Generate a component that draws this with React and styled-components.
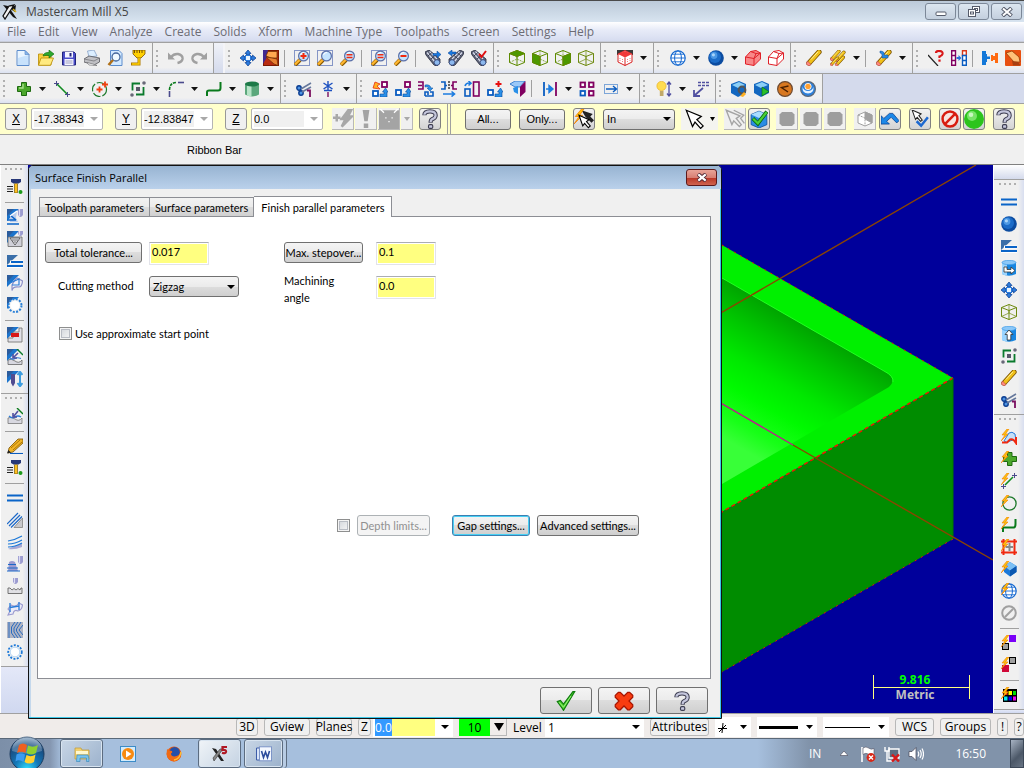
import React from "react";
import styled, { createGlobalStyle, css } from "styled-components";

const UI_FONT = '"Open Sans", "Noto Sans", sans-serif';
const ENTRY_FONT = '"Liberation Sans", Arial, sans-serif';
const DIALOG_FONT = 'Lato, "Liberation Sans", sans-serif';

// ---------- shared icon parts ----------

const Bolt = () => (
    <g>
        <path d="M6 0 L1 6 L4 6 L0 12 L7 5 L4.5 5 L8 0 Z" fill="#FFC20E" stroke="#F07D00" strokeWidth=".6" />
    </g>
);

const Lens = ({ dashed, sign }) => (
    <g>
        {dashed && <rect x=".5" y=".5" width="15" height="15" fill="none" stroke="#1A3A9C" strokeDasharray="1 1" />}
        <path d="M1 15 L6 10" stroke="#8A5A00" strokeWidth="4" />
        <path d="M1 14.5 L6 9.5" stroke="#FFB62E" strokeWidth="2.4" />
        <circle cx="9.5" cy="6" r="4.9" fill="#C4E4FF" stroke="#5A6FA8" strokeWidth="1.2" />
        <path d="M6.5 5 A3.5 3.5 0 0 1 10 2.5" stroke="#fff" fill="none" />
        {sign === "plus" && <path d="M6.5 6 H12.5 M9.5 3 V9" stroke="#F02A10" strokeWidth="2" />}
        {sign === "minus" && <path d="M6.5 6 H12.5" stroke="#F02A10" strokeWidth="2" />}
        {sign === "equal" && <path d="M6.5 4.8 H12.5 M6.5 7.6 H12.5" stroke="#F02A10" strokeWidth="1.5" />}
    </g>
);

const Scope = ({ flip, mark }) => (
    <g>
        <g transform={flip ? "translate(16 0) scale(-1 1)" : undefined}>
            <path d="M0 2 L4 0 L15 9 L15 13 L12 16 L9 15 L1 5 Z" fill="#5E6478" stroke="#22263A" strokeWidth=".8" />
            <path d="M2 2.5 L10 12 M4.5 1.5 L12 9" stroke="#D8DCEC" strokeWidth="1.2" />
            <path d="M3 6 L7 2.5 M6 9 L10 5.5" stroke="#22263A" strokeWidth=".8" />
            <ellipse cx="12" cy="12.5" rx="2.8" ry="2.8" fill="#8DB9EE" stroke="#33457A" strokeWidth=".8" />
        </g>
        {mark === "right" && <path d="M8 3.5 H12 V1 L16 4.5 L12 8 V5.5 H8 Z" fill="#1A7AE0" stroke="#083C8C" strokeWidth=".5" />}
        {mark === "left" && <path d="M8 2 H4 V0 L0 3 L4 6 V4 H8 Z" fill="#1A7AE0" stroke="#083C8C" strokeWidth=".5" />}
        {mark === "check" && <path d="M8 4 L10.5 7 L15 1" stroke="#E01010" strokeWidth="2" fill="none" />}
    </g>
);

const WireBox = ({ color, face, fill }) => (
    <g stroke={color} fill="none" strokeWidth="1">
        {face === "top" && <path d="M.5 3.5 L8 .5 L15.5 3.5 L8 6.5 Z" fill={fill} />}
        {face === "left" && <path d="M.5 3.5 L8 6.5 V15.5 L.5 12.5 Z" fill={fill} />}
        {face === "right" && <path d="M15.5 3.5 L8 6.5 V15.5 L15.5 12.5 Z" fill={fill} />}
        <path d="M.5 3.5 L8 .5 L15.5 3.5 V12.5 L8 15.5 L.5 12.5 Z" />
        <path d="M.5 3.5 L8 6.5 L15.5 3.5 M8 6.5 V15.5" />
        <path d="M8 .5 V9 L.5 12.5 M8 9 L15.5 12.5" strokeWidth=".7" strokeDasharray={face ? "2 1" : undefined} />
    </g>
);

const Globe = ({ color }) => (
    <g fill="none" stroke={color}>
        <circle cx="8" cy="8" r="7.2" fill="#fff" strokeWidth="1.2" />
        <ellipse cx="8" cy="8" rx="3.4" ry="7.2" />
        <path d="M.8 8 H15.2 M2 4.2 H14 M2 11.8 H14" strokeWidth=".9" />
    </g>
);

const Pencil = () => (
    <g>
        <path d="M3 13 L13 2" stroke="#7A5200" strokeWidth="5.2" strokeLinecap="round" />
        <path d="M4 12 L13 2" stroke="#F0C018" strokeWidth="3.6" strokeLinecap="round" />
        <path d="M5 9.5 L12 1.8" stroke="#FFF09A" strokeWidth="1" />
        <path d="M1.5 11 L5 14.5 L3 16 L0 14 Z" fill="#FF8A80" stroke="#B04038" strokeWidth=".5" />
    </g>
);

const Wedge = ({ children }) => (
    <g>
        <path d="M0 0 H12 L0 12 Z" fill="#1C74CC" />
        <path d="M0 0 H7 L0 7 Z" fill="#2C5C9C" />
        {children}
    </g>
);

const Sq = ({ x, y, color, s = 5 }) => (
    <rect x={x} y={y} width={s} height={s} fill="#fff" stroke={color} strokeWidth="1.8" />
);

const PURPLE = "#800060";
const BLUE = "#0A5CC0";

const BendArrow = ({ x = 8, y = 7 }) => (
    <path
        d={`M${x} ${y + 6} H${x + 4} V${y + 4} H${x + 2.5} L${x + 5.5} ${y} L${x + 8} ${y + 4} H${x + 7} V${y + 9} H${x} Z`}
        fill="#2A90E8" stroke="#0A4C9C" strokeWidth=".6"
    />
);

const BlueCan = ({ children }) => (
    <g>
        <path d="M1 2.5 V14 Q8 17.5 15 14 V2.5 Z" fill="#1886E0" />
        <path d="M1 2.5 V14 Q4 15.5 6 15.6 V3 Z" fill="#9AD4FF" />
        <ellipse cx="8" cy="2.5" rx="7" ry="2.2" fill="#8CC8F8" stroke="#3A9AE8" strokeWidth=".7" />
        {children}
    </g>
);

const Cutter = ({ x = 10, y = 0, h = 9 }) => (
    <g>
        <path d={`M${x} ${y} H${x + 5} V${y + h - 2} Q${x + 2.5} ${y + h + 2} ${x} ${y + h - 2} Z`} fill="#9C9CD0" />
        <path d={`M${x + 1.5} ${y} V${y + h - 1}`} stroke="#DCDCF4" strokeWidth="1.2" />
    </g>
);

// ---------- icon set, 16 x 16 ----------

const icons = {
    newFile: (
        <g>
            <path d="M2 .5 H10 L14 4.5 V15.5 H2 Z" fill="#EAF5FF" stroke="#5C8CCC" />
            <path d="M3 8 L13 5 V15 H3 Z" fill="#C8E2FC" />
            <path d="M10 .5 V4.5 H14 Z" fill="#8CB8EC" stroke="#5C8CCC" strokeWidth=".7" />
        </g>
    ),
    open: (
        <g>
            <path d="M.5 4 H5 L6.5 5.5 H13 V15 H.5 Z" fill="#F8D040" stroke="#B88A00" strokeWidth=".8" />
            <path d="M3 8 H15.5 L12.5 15.3 H.5 Z" fill="#FFEA80" stroke="#B88A00" strokeWidth=".8" />
            <path d="M5 6 Q6 2 11 2.5 V0 L16 4 L11 8 V5.5 Q8 5 5 6 Z" fill="#2EA82E" stroke="#0A6A0A" strokeWidth=".6" />
        </g>
    ),
    save: (
        <g>
            <path d="M1.5 2 H13 L14.5 3.5 V15 H1.5 Z" fill="#4A4CC8" stroke="#22247C" />
            <rect x="4" y="2" width="8" height="5.5" fill="#F4F4FF" />
            <rect x="8.5" y="3" width="2" height="3.5" fill="#22247C" />
            <rect x="3.5" y="9" width="9" height="6" fill="#F4F4FF" />
            <path d="M4.5 11 H11.5 M4.5 13 H11.5" stroke="#A0A0C0" />
        </g>
    ),
    print: (
        <g>
            <path d="M5 7 L3.5 1 L10 0 L13 6 Z" fill="#DCEEFF" stroke="#7A96C0" strokeWidth=".7" />
            <path d="M0 9 L5 6 L15.5 8 V12 L10 15 L0 12 Z" fill="#C0C0C4" stroke="#55555A" strokeWidth=".8" />
            <path d="M0 9 L10 11 L15.5 8" stroke="#77777C" fill="none" strokeWidth=".8" />
            <path d="M3 12.5 L9 14 L13 15.5 L5 15 Z" fill="#fff" stroke="#66666A" strokeWidth=".6" />
        </g>
    ),
    preview: (
        <g>
            <path d="M3.5 .5 H12 L15 3.5 V15.5 H3.5 Z" fill="#D4EAFF" stroke="#5C8CCC" />
            <circle cx="9" cy="7" r="4" fill="#F0FAFF" stroke="#44669C" strokeWidth="1.3" />
            <path d="M1.5 15 L6 10" stroke="#B07018" strokeWidth="2.6" />
        </g>
    ),
    funnel: (
        <g>
            <path d="M3 0 H15 V4 L11 8 H7 L3 4 Z" fill="#FFD000" stroke="#7A5000" strokeWidth=".8" />
            <path d="M4.5 0 V3 M7 0 V3 M9.5 0 V3 M12 0 V3" stroke="#7A5000" />
            <path d="M9 8 V14 H1" stroke="#B07C00" strokeWidth="3" fill="none" />
            <path d="M9 8 V14 H2" stroke="#FFD000" strokeWidth="1.4" fill="none" />
        </g>
    ),
    undo: (
        <g fill="none" stroke="#A0A0A0" strokeWidth="2.4">
            <path d="M3 7 Q6 3.5 10 4 Q15 5 14.5 9 Q14 12 9.5 13" />
            <path d="M0 2.5 V9.5 H7 Z" fill="#A0A0A0" stroke="none" />
        </g>
    ),
    redo: (
        <g fill="none" stroke="#A0A0A0" strokeWidth="2.4">
            <path d="M13 7 Q10 3.5 6 4 Q1 5 1.5 9 Q2 12 6.5 13" />
            <path d="M16 2.5 V9.5 H9 Z" fill="#A0A0A0" stroke="none" />
        </g>
    ),
    fit: (
        <g fill="#2A7ADC" stroke="#0A3C90" strokeWidth=".7">
            <path d="M8 0 L11 3.5 H9.5 V5 H6.5 V3.5 H5 Z" />
            <path d="M8 16 L11 12.5 H9.5 V11 H6.5 V12.5 H5 Z" />
            <path d="M0 8 L3.5 5 V6.5 H5 V9.5 H3.5 V11 Z" />
            <path d="M16 8 L12.5 5 V6.5 H11 V9.5 H12.5 V11 Z" />
            <rect x="5.5" y="5.5" width="5" height="5" fill="#E8F4FF" stroke="#2A7ADC" strokeWidth="1" />
        </g>
    ),
    repaint: (
        <g>
            <rect x=".5" y=".5" width="15" height="15" fill="#B82C10" stroke="#7A1800" />
            <path d="M0 0 H5 L4 7 L0 14 Z" fill="#402890" />
            <path d="M5 1.5 H14 V8 L8 8 L3 6 Z" fill="#FFA850" stroke="#6A2C00" strokeWidth=".7" />
            <path d="M3 7 L9 8 L14 9 L15 15.5 L11 14 Z" fill="#E88030" stroke="#6A2C00" strokeWidth=".7" />
        </g>
    ),
    zoomWindow: <Lens dashed sign="plus" />,
    zoomTarget: <Lens dashed />,
    zoomOut: <Lens sign="equal" />,
    zoomPrev: <Lens dashed sign="equal" />,
    zoomMinus: <Lens sign="minus" />,
    scopeNext: <Scope mark="right" />,
    scopePrev: <Scope flip mark="left" />,
    scopeCheck: <Scope mark="check" />,
    cubeTop: <WireBox color="#5E8A00" face="top" fill="#4C9A00" />,
    cubeLeft: <WireBox color="#5E8A00" face="left" fill="#4C9A00" />,
    cubeRight: <WireBox color="#5E8A00" face="right" fill="#4C9A00" />,
    cubeIso: <WireBox color="#6E8A10" />,
    cubeRed: (
        <g>
            <path d="M0 0 H16 V5 H0 Z" fill="#3A3A3A" />
            <path d="M1 4 L8 .5 L15 4 V12 L8 15.5 L1 12 Z" fill="#fff" stroke="#D82020" />
            <path d="M1 4 L8 1 L15 4 L8 7.5 Z" fill="#F03838" />
            <path d="M8 7.5 V15.5" stroke="#D82020" />
            <path d="M3 8 V11 M5.5 9 V12 M10.5 12 V9 M13 11 V8" stroke="#F08080" strokeDasharray="1 1" />
        </g>
    ),
    globe: <Globe color="#1468D0" />,
    sphere: (
        <g>
            <circle cx="8" cy="8" r="7.8" fill="#0C4CA0" />
            <circle cx="7" cy="7" r="6" fill="#1C6CC8" />
            <circle cx="6" cy="5.5" r="3.4" fill="#4C98E4" />
            <circle cx="5.4" cy="4.8" r="1.6" fill="#A8D4FA" />
        </g>
    ),
    solidRed: (
        <g stroke="#E02028" strokeWidth="1">
            <path d="M.5 7 L5.5 1.5 L11 .5 L15.5 3 V9 L9 15.5 L.5 14 Z" fill="#F88888" />
            <path d="M.5 7 L9 8.5 V15.5 M9 8.5 L15.5 3 M5.5 1.5 L11 3.5 L15.5 3 M11 3.5 L9 8.5" fill="none" />
        </g>
    ),
    wireRed: (
        <g stroke="#E02028" strokeWidth="1">
            <path d="M.5 7 L5.5 1.5 L11 .5 L15.5 3 V9 L9 15.5 L.5 14 Z" fill="#fff" />
            <path d="M.5 7 L9 8.5 V15.5 M9 8.5 L15.5 3 M5.5 1.5 L11 3.5 L15.5 3 M11 3.5 L9 8.5" fill="none" />
        </g>
    ),
    pencil: <Pencil />,
    pencils: (
        <g>
            <g transform="scale(.68)"><Pencil /></g>
            <g transform="translate(5 1) scale(.68)"><Pencil /></g>
            <g transform="translate(5 6) scale(.64)"><Pencil /></g>
            <g transform="translate(0 7) scale(.56)"><Pencil /></g>
        </g>
    ),
    undelete: (
        <g>
            <Pencil />
            <path d="M4 1 Q9 1 8 5 H12 V8 H6 V5 Q6 3 4 3 Z" fill="#2A8AE0" stroke="#0A4C9C" strokeWidth=".5" />
        </g>
    ),
    analyze: (
        <g fill="none">
            <path d="M0 5 L10 16" stroke="#222" strokeWidth="1.2" />
            <path d="M8 3 Q8 1 11 1 Q15 1 14.5 4 Q14 6 11.5 6.5 V8" stroke="#D81818" strokeWidth="2.2" />
            <rect x="10.4" y="9.5" width="2.2" height="2.2" fill="#D81818" />
        </g>
    ),
    compare: (
        <g fill="#fff" strokeWidth="1.4">
            <path d="M.7 .7 H4.5 V15.3 H.7 Z M.7 5.5 H4.5 M.7 10.5 H4.5" stroke={PURPLE} />
            <path d="M11.5 .7 H15.3 V5.5 H11.5 Z" stroke="#D83818" />
            <path d="M11.5 5.5 H15.3 V15.3 H11.5 Z M11.5 10.5 H15.3" stroke={BLUE} />
            <path d="M5.5 7 H7.5 V5 L10.5 8 L7.5 11 V9 H5.5 Z" fill="#2A70D8" />
        </g>
    ),
    statistics: (
        <g>
            <path d="M0 1 H4 V4 H5 V6.5 H8 V9 H5 V12 H4 V15 H0 Z" fill="#1478D8" />
            <path d="M16 3 H13 V6 H11 V5 H9 V11 H11 V10 H13 V13 H16 Z" fill="#FF6A10" />
        </g>
    ),
    paint: (
        <g>
            <rect width="16" height="16" rx="1" fill="#E85010" />
            <path d="M1 3 L7 1 L14 7 L15 12 L9 12 Z" fill="#FFC078" stroke="#8C3400" strokeWidth=".7" />
            <path d="M7 11 L13 12 L15.5 15.5 H8 Z" fill="#A84010" />
        </g>
    ),
    point: (
        <g>
            <path d="M5.5 1.5 H10.5 V5.5 H14.5 V10.5 H10.5 V14.5 H5.5 V10.5 H1.5 V5.5 H5.5 Z" fill="#4CA82C" stroke="#1E6A10" />
            <path d="M7 3 V7 H3" stroke="#A8E08C" fill="none" strokeWidth="1.4" />
        </g>
    ),
    line: (
        <g fill="none">
            <path d="M3 3 L13 13" stroke="#108A20" strokeWidth="1.6" />
            <path d="M0 2.5 H5 M2.5 0 V5 M11 13.5 H16 M13.5 11 V16" stroke="#4A4A8C" />
        </g>
    ),
    circle: (
        <g fill="none">
            <circle cx="7.5" cy="8.5" r="7" stroke="#1E7A2C" strokeWidth="1.2" strokeDasharray="8 2" />
            <path d="M4.5 8.5 H10.5 M7.5 5.5 V11.5 M10 3.5 H16 M13 .5 V6.5" stroke="#F04010" strokeWidth="1.8" />
        </g>
    ),
    rectangle: (
        <g>
            <path d="M10 2.5 H2.5 V9.5 M6 13.5 H13.5 V6" fill="none" stroke="#0A7A2C" strokeWidth="1.8" />
            <rect x="6" y="6" width="4" height="4" fill="#585868" />
            <circle cx="14" cy="2" r="1.8" fill="#686878" />
            <circle cx="2" cy="14" r="1.8" fill="#686878" />
        </g>
    ),
    fillet: (
        <g fill="none">
            <path d="M1.5 16 V10" stroke="#4A4A8C" strokeWidth="1.6" />
            <path d="M1.5 9 Q1.5 1.5 9 1.5" stroke="#0A7A1C" strokeWidth="1.6" strokeDasharray="3 1" />
            <path d="M10 1.5 H16" stroke="#4A4A8C" strokeWidth="1.6" />
        </g>
    ),
    spline: <path d="M1 15 V11 Q1 9.5 3 9.5 H12 Q14.5 9.5 14.5 7 V1" fill="none" stroke="#0A7A1C" strokeWidth="2" />,
    cylinder: (
        <g>
            <path d="M1 3 V13.5 Q8 17.5 15 13.5 V3 Z" fill="#5CA87C" />
            <path d="M3 3 V14.5 Q5.5 15.5 7.5 15.5 V3 Z" fill="#B8E4C8" />
            <ellipse cx="8" cy="3" rx="7" ry="2.6" fill="#1E7A48" />
        </g>
    ),
    trim: (
        <g>
            <circle cx="3" cy="7" r="2.2" fill="#4C94E4" stroke="#0A3C90" strokeWidth="1.4" />
            <circle cx="5" cy="12" r="2.2" fill="#4C94E4" stroke="#0A3C90" strokeWidth="1.4" />
            <path d="M5 8 L15 2 M6 11 L15 6" stroke="#66789C" strokeWidth="1.6" />
            <path d="M11 9.5 H14 V16" fill="none" stroke="#7A1060" strokeWidth="1.8" />
        </g>
    ),
    breakIt: (
        <g stroke="#1C50C0" strokeWidth="1.4" fill="none">
            <path d="M8 0 V10 M3.5 2 L12.5 8 M12.5 2 L3.5 8 M4 9.5 H12" />
            <path d="M8 11 V16" stroke="#7A1060" />
        </g>
    ),
    xfDynamic: (
        <g>
            <path d="M3 1 L8 3 L5 5 L8 8 L1 7 Z" fill="#FFB020" stroke="#E83010" strokeWidth=".8" />
            <Sq x="10" y="1" color={PURPLE} /><Sq x="1" y="10" color={BLUE} /><BendArrow />
        </g>
    ),
    xfTranslate: <g><Sq x="10" y="1" color={PURPLE} /><Sq x="1" y="9" color={BLUE} /><BendArrow /></g>,
    xfRotate: (
        <g>
            <path d="M0 1 H5 V8 H0 M0 4.5 H4" fill="none" stroke={PURPLE} strokeWidth="1.6" />
            <path d="M7 4 Q12 3 13 7 L15 7 L12 10 L9 7 H11 Q10 5 7 6 Z" fill="#2A90E8" stroke="#0A4C9C" strokeWidth=".5" />
            <path d="M7 15 H15 V11 H12 M7 15 V11 H10 V14" fill="none" stroke={BLUE} strokeWidth="1.6" />
        </g>
    ),
    xfMirror: (
        <g fill="none" strokeWidth="1.6">
            <path d="M0 1 H4 V8 H0 M4 4.5 H6" stroke={BLUE} />
            <path d="M8 0 V9" stroke="#444" strokeDasharray="2 1" />
            <path d="M16 1 H12 V8 H16 M12 4.5 H10" stroke={PURPLE} />
            <path d="M2 13 H13 M10.5 10.5 L13.5 13 L10.5 15.5" stroke="#1C7CE0" />
        </g>
    ),
    xfScale: (
        <g fill="none" strokeWidth="1.6">
            <rect x="9.5" y="1" width="5.5" height="14" stroke={PURPLE} />
            <rect x="1" y="8" width="5" height="7" stroke={BLUE} />
            <path d="M1 5 Q2 1.5 6 2 M4.5 0 L7 2.2 L4.5 4.5" stroke="#1C7CE0" />
        </g>
    ),
    xfMove: (
        <g>
            <path d="M11.5 0 V6 M8.5 3 H14.5" stroke="#E81010" strokeWidth="2" />
            <Sq x="1" y="9" color={BLUE} /><BendArrow />
        </g>
    ),
    xfProject: (
        <g>
            <path d="M0 3 L5 0 H15 L10 6 H5 Z" fill="#9AC8F8" stroke={BLUE} strokeWidth=".7" />
            <path d="M10 6 L15.5 0 V11 L10 16 Z" fill={PURPLE} />
            <path d="M3 7 L8 5 V13 L4 11 Z" fill="#2A90E8" />
        </g>
    ),
    offset: (
        <g>
            <path d="M2 1 V15 " stroke={BLUE} strokeWidth="1.8" />
            <path d="M14 1 V15" stroke={PURPLE} strokeWidth="1.8" />
            <path d="M4 8 H9 M7 4.5 L11 8 L7 11.5 Z" stroke="#1C7CE0" strokeWidth="1.4" fill="#1C7CE0" />
        </g>
    ),
    array: (
        <g>
            <Sq x="1.5" y="1.5" color={PURPLE} s={4.5} /><Sq x="10" y="1.5" color={PURPLE} s={4.5} />
            <Sq x="1.5" y="10" color={BLUE} s={4.5} /><Sq x="10" y="10" color={PURPLE} s={4.5} />
        </g>
    ),
    drag: (
        <g fill="none" stroke={BLUE}>
            <rect x="1.5" y="3.5" width="13" height="9" strokeDasharray="1 1" />
            <path d="M3 8 H13 M10 5 L13.5 8 L10 11" strokeWidth="1.4" />
        </g>
    ),
    bulb: (
        <g>
            <circle cx="5.5" cy="5" r="4.6" fill="#FFDC50" stroke="#E8B020" strokeWidth=".7" />
            <path d="M3.8 10 H7.5 V15 H3.8 Z" fill="#C0A868" />
            <path d="M13 1 V15 M11 3.5 L13 1 L15 3.5 M11 12.5 L13 15 L15 12.5" fill="none" stroke="#5050A0" strokeWidth="1.3" />
        </g>
    ),
    note: (
        <g fill="none" stroke="#5050A0">
            <path d="M5 1.5 H16 M5 4.5 H16" strokeDasharray="3 1" strokeWidth="1.4" />
            <path d="M10 7 L2 14 M1 9 V15 H7" strokeWidth="1.8" />
        </g>
    ),
    toolGear: (
        <g>
            <path d="M0 3 L8 0 L15 3 V12 L7 16 L0 12 Z" fill="#1468C0" />
            <path d="M1 4 L8 1 L14 4 L7 7 Z" fill="#8CD0F8" />
            <circle cx="11" cy="9" r="3.4" fill="none" stroke="#555" strokeWidth="2" />
            <path d="M9 15 L13 11 L15 13 L12 16 Z" fill="#FFB020" />
        </g>
    ),
    toolPlay: (
        <g>
            <path d="M0 3 L8 0 L15 3 V12 L7 16 L0 12 Z" fill="#1468C0" />
            <path d="M1 4 L8 1 L14 4 L7 7 Z" fill="#8CD0F8" />
            <path d="M8 6 L15 10.5 L8 15 Z" fill="#2AC02A" stroke="#0A6A0A" strokeWidth=".6" />
        </g>
    ),
    backplot: (
        <g>
            <circle cx="8" cy="8" r="7.4" fill="#D87820" stroke="#6E4A30" strokeWidth="1.2" />
            <path d="M11.5 5 L4.5 6.5 L11 11" fill="none" stroke="#4A2000" strokeWidth="1.4" />
        </g>
    ),
    verify: (
        <g>
            <circle cx="8" cy="8" r="7.4" fill="#2C80DC" stroke="#5C6878" strokeWidth="1.2" />
            <path d="M2.5 6 Q4 10 8 10 Q12 10 13.5 6 Q14 12 8 12.5 Q2 12 2.5 6" fill="#E8F4FF" />
            <circle cx="8" cy="5.5" r="3.2" fill="#FFA030" stroke="#fff" strokeWidth=".8" />
        </g>
    ),
    lightGrey: <path d="M3 4 V10 M0 7 H6 M13 0 L7 8 H10 L7 14 L15 6 H12 L15 0 Z" fill="#A8A8A8" stroke="#A8A8A8" strokeWidth="2" />,
    bangGrey: <path d="M5 0 H11 L9.5 10 H6.5 Z M6 12 H10 V16 H6 Z" fill="#A4A4A4" />,
    boxGrey: (
        <g>
            <rect y="1" width="16" height="15" fill="#A4A4A4" />
            <path d="M1 0 L4 3 M15 0 L12 3" stroke="#fff" />
            <path d="M5 7 H6 M10 7 H11 M7.5 10 H8.5" stroke="#fff" />
        </g>
    ),
    help: (
        <g>
            <path d="M3.5 5 Q3.5 1.8 8 1.8 Q12.5 1.8 12.5 5 Q12.5 7.3 9.5 8.3 Q8.5 8.8 8.5 11" fill="none" stroke="#3C3C50" strokeWidth="3.4" />
            <path d="M3.5 4.6 Q3.8 1.8 8 1.8 Q12.5 1.8 12.5 5 Q12.5 7.3 9.5 8.3 Q8.5 8.8 8.5 10.6" fill="none" stroke="#C4C6DC" strokeWidth="1.8" />
            <rect x="6.8" y="12.5" width="3.4" height="3" rx="1" fill="#C4C6DC" stroke="#3C3C50" strokeWidth=".9" />
        </g>
    ),
    pickBolt: (
        <g>
            <path d="M6 1 L15 4 L13 6 L16 9 L14 11 L9 6 Z" fill="#222" />
            <Bolt />
            <path d="M4 5 L12 8.5 L10 10 L13 13.5 L11.5 15 L8.5 11.5 L7 13.5 Z" fill="#fff" stroke="#000" strokeWidth=".9" />
        </g>
    ),
    cursor: <path d="M1 1 L13 6 L9.5 8.5 L14.5 13.5 L12.5 15.5 L8 10.5 L6 14 Z" fill="#fff" stroke="#000" strokeWidth="1" />,
    cursorGrey: (
        <g fill="#F0F0F0" stroke="#A4A4A4" strokeWidth="1.1">
            <path d="M1 1 L12 5.5 L9 7.5 L13 12.5 L11.5 14 L7 9.5 L5.5 12.5 Z" />
            <path d="M7 1 L15 5 L12.5 7.5 L15.5 11.5" fill="none" />
        </g>
    ),
    solidCheck: (
        <g>
            <path d="M1 4 L8 1 L15 4 V13 L8 16 L1 13 Z" fill="#2A8CE4" stroke="#0A4C9C" strokeWidth=".7" />
            <path d="M1 4 L8 1 L15 4 L8 7 Z" fill="#A8DCFF" />
            <path d="M2.5 7.5 L7 12 L15 1.5" fill="none" stroke="#0A6A0A" strokeWidth="3.4" />
            <path d="M2.8 7.8 L7 11.8 L14.7 2" fill="none" stroke="#48D038" strokeWidth="2" />
        </g>
    ),
    hexGrey: <path d="M3 1 H13 L15.5 3.5 V12.5 L13 15 H3 L.5 12.5 V3.5 Z" fill="#9E9E9E" />,
    cubeGrey: (
        <g stroke="#A0A0A0" fill="#fff">
            <path d="M1 4 L8 1 L15 4 V12 L8 15 L1 12 Z" />
            <path d="M8 1 L15 4 V12 L8 8 Z" fill="#A0A0A0" />
            <path d="M1 4 L8 7 V15" fill="none" strokeDasharray="2 1" />
        </g>
    ),
    backArrow: <path d="M0 5 V12.5 H7.5 L5 10 L9 6.5 L14 11.5 L16 9.5 L10.5 3 H7.5 L2.5 7.5 Z" fill="#1C88E8" stroke="#0A4090" strokeWidth=".7" />,
    pickCheck: (
        <g>
            <path d="M1 0 L9 3.5 L7 5 L10 9 L8.5 10 L5.5 6.5 L4 8.5 Z" fill="#fff" stroke="#222" strokeWidth=".9" />
            <path d="M5 10 L9 14 L15 6.5" fill="none" stroke="#1C68D0" strokeWidth="2.2" />
        </g>
    ),
    stop: (
        <g fill="none" stroke="#D81C10" strokeWidth="2.2">
            <circle cx="8" cy="8" r="6.6" fill="#F8E4E0" />
            <path d="M3.5 12.5 L12.5 3.5" />
        </g>
    ),
    go: (
        <g>
            <circle cx="8" cy="8" r="8" fill="#2CC41C" />
            <circle cx="6.4" cy="5.6" r="4" fill="#78E468" />
            <circle cx="5.6" cy="4.6" r="1.8" fill="#C8F8C0" />
        </g>
    ),
    ok: (
        <g>
            <path d="M1 8.5 L3.5 7.5 L6 10.5 L13.5 .5 L15 .5 L7.5 13 L6 15.5 L5 14 Z" fill="#48D028" stroke="#0E7A0E" strokeWidth=".9" />
            <path d="M2.5 9 L6 13 L12 4" fill="none" stroke="#9CF080" strokeWidth=".8" />
        </g>
    ),
    cancel: (
        <path
            d="M1 3.5 L3.5 1 H5 L8 4 L11 1 H12.5 L15 3.5 V5 L12 8 L15 11 V12.5 L12.5 15 H11 L8 12 L5 15 H3.5 L1 12.5 V11 L4 8 L1 5 Z"
            fill="#F83C10" stroke="#A81400" strokeWidth="1"
        />
    ),
    // side bars
    tHead: (
        <g>
            <path d="M4 0 H14 V3 L11.5 4.5 H6.5 L4 3 Z" fill="#283878" />
            <path d="M9 4.5 V14" stroke="#8C6400" strokeWidth="3.6" />
            <path d="M9 5 V13.5" stroke="#FFC020" strokeWidth="2" />
            <path d="M0 7.5 H6 M0 10 H6 M0 12.5 H6" stroke="#222" strokeWidth="1.1" />
            <circle cx="13.5" cy="13" r="2" fill="#1C9A1C" />
        </g>
    ),
    roughParallel: (
        <Wedge>
            <path d="M3 7 L10 2 L9 9 L11 13 H3 Z" fill="#B8CCEC" />
            <path d="M0 11 H9 M0 15 H12 M3 6 L9 11" stroke="#0A64C8" strokeWidth="1.6" />
            <path d="M3 7 L10 2" stroke="#fff" strokeWidth="1.4" />
            <Cutter x={11} y={0} h={8} />
        </Wedge>
    ),
    roughPocket: (
        <Wedge>
            <path d="M1 6 H15 V15.5 H1 Z" fill="#D0D0D8" stroke="#666" strokeWidth=".8" />
            <path d="M3 7 H13 L8 14 Z M5 9 H11 M6.5 11 H9.5" fill="#F4F4FC" stroke="#555" strokeWidth=".9" />
            <Cutter x={11} y={0} h={5} />
        </Wedge>
    ),
    contour: (
        <g>
            <path d="M0 2 H11 L0 12 Z" fill="#3A6EA8" />
            <path d="M3 9 H16 M0 13.5 H16" stroke="#fff" strokeWidth="3" />
            <path d="M4 9 H16 M0 13 H16" stroke="#0A64C8" strokeWidth="2" />
        </g>
    ),
    flow: (
        <Wedge>
            <path d="M5 10 Q8 4 10 3 L15.5 6 Q15 12 12 12 Q6 11 5 15.5 Z" fill="#F0F0F8" stroke="#8C90C8" strokeWidth="1.2" />
            <path d="M3 8 L12 4 V10 L5 10" fill="none" stroke="#2A7CD8" strokeWidth="1.2" />
        </Wedge>
    ),
    radial: (
        <Wedge>
            <circle cx="8" cy="8.5" r="6.5" fill="#F0F0F0" stroke="#2A80D8" strokeWidth="2" strokeDasharray="2 1.4" />
            <circle cx="8" cy="8.5" r="4.6" fill="#fff" />
        </Wedge>
    ),
    restRed: (
        <Wedge>
            <path d="M1 15 V11 H6 V5 H12 V1 H15 V15 Z" fill="#E0E0E8" stroke="#777" strokeWidth=".9" />
            <rect x="4" y="6" width="8" height="4" fill="#D81818" />
        </Wedge>
    ),
    project: (
        <Wedge>
            <path d="M1 11 Q4 9 8 12 T15 11 V15.5 H1 Z" fill="#D8D8E0" stroke="#666" strokeWidth=".8" />
            <path d="M3 9 Q6 11 8 9.5 T14 9.5" fill="none" stroke="#2A7CD8" strokeWidth="1.2" />
            <path d="M10 0 L16 6" stroke="#0A7A2C" strokeWidth="1.4" />
            <path d="M11 4 L7 8 M6 5 V9 H10" stroke="#5050A0" strokeWidth="1.6" fill="none" />
        </Wedge>
    ),
    plunge: (
        <Wedge>
            <path d="M4 3 H8 V12 L6 15.5 L4 12 Z" fill="#504C90" />
            <path d="M13 1 V15 M10.5 4 L13 .8 L15.5 4 M10.5 12 L13 15.2 L15.5 12" fill="none" stroke="#3C9CE0" strokeWidth="2" />
        </Wedge>
    ),
    projectOnly: (
        <g>
            <path d="M1 10 Q4 8 8 11 T15 10 V15.5 H1 Z" fill="#D8D8E0" stroke="#777" strokeWidth=".8" />
            <path d="M2 8 Q5 11 8 9 T14 9" fill="none" stroke="#2A7CD8" strokeWidth="1.3" />
            <path d="M11 3 L7 8 M6 5 V9 H10" stroke="#5050A0" strokeWidth="1.6" fill="none" />
            <path d="M10 0 L16 6" stroke="#0A7A1C" strokeWidth="1.4" />
        </g>
    ),
    bigPencil: (
        <g>
            <path d="M2 10 L11 1 H16 V5 L6 14 L1 15 Z" fill="#F0B428" stroke="#7A5200" strokeWidth=".8" />
            <path d="M4 10 L13 2 M6 12 L15 4" stroke="#A87000" strokeWidth=".9" />
            <path d="M1.4 12 L4 14.4 L0 15.6 Z" fill="#222" />
            <path d="M3 15.5 H16" stroke={BLUE} strokeWidth="1.1" />
        </g>
    ),
    bars: <path d="M0 5.5 H16 M0 10.5 H16" stroke="#0A64C8" strokeWidth="2" />,
    slant: (
        <g>
            <path d="M7 15.5 L15.5 6 V15.5 Z" fill="#C8C8CC" stroke="#777" strokeWidth=".7" />
            <path d="M0 12 L11 1 M2 14 L13 3 M4 15.5 L15 4.5" stroke="#1C68C8" strokeWidth="1.2" />
        </g>
    ),
    shallow: (
        <g>
            <path d="M1 15 L15 9 V13 Q8 16 1 15 Z" fill="#A8A8D4" />
            <path d="M1 7 Q8 6 15 2 M1 10 Q8 10 15 6 M1 13 Q8 13 15 9" stroke="#1C78D8" strokeWidth="1.2" fill="none" />
        </g>
    ),
    steep: (
        <g>
            <path d="M2 6 Q5 4 8 6 L11 15 H1 Z" fill="#9C9CD0" />
            <path d="M1 8.5 H9 M0 12 H11 M0 15 H13" stroke="#1C68C8" strokeWidth="1.2" />
            <Cutter x={11} y={0} h={8} />
        </g>
    ),
    leftover: (
        <g>
            <Cutter x={6} y={-1} h={7} />
            <path d="M1 10 H3 L5 12 L7 10.5 L9 12 L11 10.5 L13 12 L14 10 H15 V15.5 H1 Z" fill="#E0E0E4" stroke="#666" strokeWidth=".9" />
        </g>
    ),
    flowline: (
        <g>
            <path d="M1 9 L4 5 Q9 8 12 3 L15.5 5 Q15 10 11 11 Q7 9 6 14 L1 15 L3 11 Z" fill="#ECECF8" stroke="#9C9CD0" strokeWidth="1.2" />
            <path d="M3 3 V12 M3 7.5 L12 6 M12 2 V10" fill="none" stroke="#2A7CD8" strokeWidth="1.3" />
        </g>
    ),
    scallop: (
        <g fill="none" stroke="#2A6CC0">
            <rect width="16" height="16" fill="#B0B4C4" stroke="none" />
            <path d="M2 0 V16 M8 0 L4.5 5 V11 L8 16 M11 0 L7 6 V10 L11 16 M14 0 L9.5 7 V9 L14 16 M16 3 L12 8 L16 13" />
        </g>
    ),
    radialOnly: (
        <g>
            <circle cx="8" cy="8" r="6.8" fill="none" stroke="#1C78D8" strokeWidth="1.8" strokeDasharray="2 1.4" />
            <circle cx="8" cy="8" r="4.8" fill="#fff" stroke="#9CC8F0" strokeWidth=".7" />
        </g>
    ),
    canTurn: (
        <BlueCan>
            <path d="M3 7 V12 H10 V14 L14 10.5 L10 7 V9.5 H6 V7 Z" fill="#fff" stroke="#333" strokeWidth=".8" />
        </BlueCan>
    ),
    canUp: (
        <BlueCan>
            <path d="M8 4 L12 8.5 H9.8 V14 H6.2 V8.5 H4 Z" fill="#fff" stroke="#333" strokeWidth=".8" />
        </BlueCan>
    ),
    boltSurface: (
        <g>
            <path d="M3 12 L8 4 Q11 2 14 5 L15 12 Q12 10 9 12 Q6 15 3 12 Z" fill="#C4E0F8" stroke="#2A7CD8" />
            <path d="M1 13.5 H6 L9 10.5 Q12 9 15 14 V8" fill="none" stroke="#F02A10" strokeWidth="2" />
            <Bolt />
        </g>
    ),
    boltPoint: (
        <g>
            <path d="M6.5 1.5 H11 V5.5 H15.5 V10.5 H11 V14.5 H6.5 V10.5 H2.5 V5.5 H6.5 Z" fill="#4CA82C" stroke="#1E6A10" />
            <Bolt />
        </g>
    ),
    boltLine: (
        <g>
            <path d="M4 12 L12 4" stroke="#108A20" strokeWidth="1.6" />
            <path d="M11 2.5 H16 M13.5 0 V5 M0 13.5 H5 M2.5 11 V16" stroke="#4A4A8C" />
            <Bolt />
        </g>
    ),
    boltCircle: <g><circle cx="8.5" cy="8.5" r="6.6" fill="none" stroke="#1E7A2C" strokeWidth="1.3" /><Bolt /></g>,
    boltSpline: (
        <g>
            <path d="M2 15 V10.5 H13 Q14.5 10 14.5 7 V2" fill="none" stroke="#0A7A1C" strokeWidth="2" />
            <Bolt />
        </g>
    ),
    boltGrid: (
        <g>
            <path d="M4.5 8 H12 M8.5 4 V12" stroke="#888" strokeWidth="2" />
            <path d="M0 2.5 H16 M0 13.5 H16 M2.5 0 V16 M13.5 0 V16" stroke="#F02A10" strokeWidth="2" />
            <Bolt />
        </g>
    ),
    boltSolid: (
        <g>
            <path d="M9 1 L15.5 5 V11 L9 15.5 L3 11 V5 Z" fill="#1C78D8" />
            <path d="M9 1 L15.5 5 L9 9.5 L3 5 Z" fill="#7CC0F4" />
            <path d="M9 9.5 L15.5 5 V11 L9 15.5 Z" fill="#0C58B0" />
            <Bolt />
        </g>
    ),
    boltGlobe: <g><Globe color="#1468D0" /><Bolt /></g>,
    noGrey: (
        <g fill="none" stroke="#A0A0A0" strokeWidth="2">
            <circle cx="8" cy="8" r="6.8" />
            <path d="M4 12 L12 4" />
        </g>
    ),
    boltViolet: (
        <g>
            <rect x="8" y="0" width="7" height="7" fill="#7A00F8" />
            <rect x="1.5" y="8.5" width="6" height="6" fill="#A0A0A0" stroke="#000" />
            <Bolt />
        </g>
    ),
    boltCrimson: (
        <g>
            <rect x="8.5" y=".5" width="6" height="6" fill="#A0A0A0" stroke="#000" />
            <rect x="1" y="8" width="7" height="7" fill="#D00838" />
            <Bolt />
        </g>
    ),
    boltPalette: (
        <g>
            <rect x="2" y="2" width="14" height="13" fill="#000" />
            <path d="M3 4 H6.5 V8 H3 Z" fill="#F02010" /><path d="M7.5 4 H11 V8 H7.5 Z" fill="#FFFF00" />
            <path d="M12 4 H15 V8 H12 Z" fill="#00E000" /><path d="M3 9.5 H6.5 V13.5 H3 Z" fill="#00E8F0" />
            <path d="M7.5 9.5 H11 V13.5 H7.5 Z" fill="#0000F0" /><path d="M12 9.5 H15 V13.5 H12 Z" fill="#F000F0" />
            <Bolt />
        </g>
    ),
    // taskbar
    folder: (
        <g>
            <path d="M1 2 H7 L8 4 H15 V13 H1 Z" fill="#F0D070" stroke="#C09830" strokeWidth=".7" />
            <path d="M2 5 H14 V8 H2 Z" fill="#FFF8D0" />
            <path d="M3 9 H14 Q15 12 15 15.5 H12.5 V12 H6 V15.5 H2.5 Z" fill="#7CC4EC" stroke="#3C8CC0" strokeWidth=".7" />
        </g>
    ),
    media: (
        <g>
            <rect x=".5" y=".5" width="15" height="15" fill="#D4ECFC" stroke="#3C8CC8" />
            <circle cx="8" cy="8" r="6" fill="#F88A10" />
            <path d="M6 4.5 L11.5 8 L6 11.5 Z" fill="#fff" />
        </g>
    ),
    firefox: (
        <g>
            <circle cx="8" cy="8" r="7.4" fill="#E85A10" />
            <circle cx="8.6" cy="6.2" r="5.2" fill="#2450A8" />
            <path d="M1 3 Q3 5 6 5 Q7 6.5 5 7.5 Q5 10.5 8.5 10.5 Q13 10 15 6 Q16 14 8 15.4 Q1 14 .6 8 Z" fill="#F06A14" />
            <path d="M8 14 Q14 13 15 6" fill="none" stroke="#FFC030" strokeWidth="1.4" />
        </g>
    ),
    mcx: (
        <g>
            <path d="M0 2 L4 3 L12 15 H9 Z" fill="#222" />
            <path d="M11 3 L2 15 L1 12 L8 3 Z" fill="#888" stroke="#333" strokeWidth=".6" />
            <path d="M15 1 H10.5 V4 Q14.5 3.5 14 6 Q13.5 8 10 6.8" fill="none" stroke="#B01824" strokeWidth="2.2" />
        </g>
    ),
    mcLogo: (
        <g>
            <path d="M1 1 L6 2 L15 15 L11 13 Z" fill="#111" />
            <path d="M12 1 L3 15 L1 12 L7 2 Z" fill="#F4F4F4" stroke="#111" strokeWidth="1.3" />
            <path d="M10 3 L14 1 L13 8 L10 6 Z" fill="#111" />
            <path d="M11 5 L14 8" stroke="#D8B018" strokeWidth="1.6" />
        </g>
    ),
    word: (
        <g>
            <path d="M.5 2 H5 V14 H.5 Z" fill="#D8E4F8" stroke="#3C5CA8" />
            <rect x="3.5" y=".8" width="12" height="14" fill="#F4F8FF" stroke="#7C94C8" />
            <path d="M5.5 5 L7.5 11.5 L9.5 6 L11.5 11.5 L13.5 5" fill="none" stroke="#2C4C9C" strokeWidth="1.6" />
        </g>
    ),
    flag: (
        <g>
            <path d="M2 1 V16" stroke="#fff" strokeWidth="1.6" />
            <path d="M3 2 Q6 0 8.5 2 T14 2.5 V8.5 Q10 9.5 8 8 T3 8.5 Z" fill="#fff" stroke="#556" strokeWidth=".6" />
            <circle cx="11" cy="11.5" r="4.4" fill="#D82818" />
            <path d="M9 9.5 L13 13.5 M13 9.5 L9 13.5" stroke="#fff" strokeWidth="1.4" />
        </g>
    ),
    network: (
        <g>
            <path d="M5 3 H15 V12 H5 Z" fill="#5C6C80" stroke="#fff" strokeWidth="1.3" />
            <path d="M1 1 V5 H5 V1 M3 5 V15 H9" fill="none" stroke="#fff" strokeWidth="1.4" />
            <path d="M8 8.5 L15 15.5 M15 8.5 L8 15.5" stroke="#D81818" strokeWidth="2.4" />
        </g>
    ),
    speaker: (
        <g>
            <path d="M1 5.5 H4 L8 1.5 V14.5 L4 10.5 H1 Z" fill="#fff" stroke="#445" strokeWidth=".7" />
            <path d="M10 5.5 Q11.5 8 10 10.5 M12 4 Q14.5 8 12 12 M14 2.5 Q17 8 14 13.5" fill="none" stroke="#fff" strokeWidth="1.2" />
        </g>
    ),
};

const Icon = ({ name, size = 16 }) => (
    <svg width={size} height={size} viewBox="0 0 16 16" aria-hidden="true">
        {icons[name]}
    </svg>
);

const Triangle = ({ color = "#111", w = 7, h = 4 }) => (
    <svg width={w} height={h} viewBox="0 0 8 4" preserveAspectRatio="none" aria-hidden="true">
        <path d="M0 0 H8 L4 4 Z" fill={color} />
    </svg>
);

// ---------- data ----------

const menus = ["File", "Edit", "View", "Analyze", "Create", "Solids", "Xform", "Machine Type", "Toolpaths", "Screen", "Settings", "Help"];

// "|" is a divider, a trailing "+" adds a drop arrow
const row1 = [
    "newFile open save print preview funnel",
    "undo redo",
    "",
    "fit repaint | zoomWindow zoomTarget zoomOut | zoomPrev zoomMinus | scopeNext scopePrev scopeCheck",
    "cubeTop cubeLeft cubeRight cubeIso",
    "cubeRed+",
    "globe+ sphere+ solidRed wireRed",
    "pencil pencils+ | undelete+",
    "analyze compare | statistics paint",
];

const row2 = [
    "point+ line+ circle+ rectangle+ fillet+ spline+ cylinder+",
    "trim breakIt+",
    "xfDynamic xfTranslate xfRotate xfMirror xfScale xfMove xfProject | offset+ array drag+",
    "bulb+ note",
    "toolGear toolPlay backplot verify",
];

const leftBars = [
    "tHead | roughParallel roughPocket contour flow radial | restRed project plunge",
    "projectOnly | bigPencil tHead | bars slant shallow steep leftover flowline scallop radialOnly",
];

const rightBars = [
    "bars sphere contour canTurn fit cubeIso canUp rectangle pencil trim",
    "boltSurface boltPoint boltLine boltCircle boltSpline boltGrid boltSolid boltGlobe noGrey | boltViolet boltCrimson | boltPalette",
];

// ---------- components ----------

const Tools = ({ items, vertical }) => (
    <ToolGroup $vertical={vertical}>
        <Grip $vertical={vertical} />
        {items.split(" ").map((item, i) => {
            if (item === "|") return <Divider key={i} $vertical={vertical} />;
            const name = item.replace("+", "");
            if (item === name) {
                return (
                    <ToolButton key={i} $vertical={vertical} aria-label={name}>
                        <Icon name={name} />
                    </ToolButton>
                );
            }
            return (
                <React.Fragment key={i}>
                    <ToolButton $wide aria-label={name}><Icon name={name} /></ToolButton>
                    <DropButton aria-label={`${name} options`}><Triangle /></DropButton>
                </React.Fragment>
            );
        })}
    </ToolGroup>
);

const Coordinate = ({ axis, value }) => (
    <CoordinateBox>
        <PushButton $w={22} $axis>{axis}</PushButton>
        <CoordinateField>
            <input aria-label={axis} defaultValue={value} />
            <Triangle color="#A8A8A8" w={8} />
        </CoordinateField>
    </CoordinateBox>
);

const Scene = () => (
    <SceneSvg viewBox="28 165 965 549" preserveAspectRatio="xMaxYMin slice" aria-label="Part view">
        <defs>
            <linearGradient id="pocket" gradientUnits="userSpaceOnUse" x1="806" y1="326" x2="737" y2="446">
                <stop offset="0" stopColor="#00A400" />
                <stop offset=".2" stopColor="#00C400" />
                <stop offset=".45" stopColor="#00E800" />
                <stop offset=".65" stopColor="#00FA00" />
                <stop offset=".85" stopColor="#18FF18" />
                <stop offset="1" stopColor="#38FF38" />
            </linearGradient>
        </defs>
        <path d="M490 378 L722 245 L953 378 L722 512 Z" fill="#00F000" />
        <path d="M490 378 L722 512 L953 378 V539 L722 672 L490 539 Z" fill="#008C00" />
        <path d="M722 278 L884 371 Q898 379 889 387 L722 484 L540 378 Z" fill="url(#pocket)" />
        <path d="M722 278 L884 371 Q894 376 893 382" fill="none" stroke="#20FF20" />
        <path d="M722 245 L953 378 M953 539 L722 672" fill="none" stroke="#E01800" strokeDasharray="2 5" />
        <path d="M953 378 L722 512" fill="none" stroke="#F01800" strokeWidth="1.5" strokeDasharray="4 3" />
        <path d="M953 378 V539" stroke="#007800" />
        <path d="M700 325 L976 165" stroke="#8C4400" strokeWidth="1.4" />
        <path d="M793 445 L993 560" stroke="#8C4400" strokeWidth="1.4" />
        <path d="M700 391 L793 445" stroke="#C01890" strokeWidth="1.4" />
        <path d="M873.5 675 V699 M969.5 675 V699 M873 687.5 H970" stroke="#FFFF80" />
        <SceneText x="915" y="684" fill="#00FF00">9.816</SceneText>
        <SceneText x="915" y="699" fill="#C0C0C0">Metric</SceneText>
    </SceneSvg>
);

const Drop = ({ id, label, w, options }) => (
    <DropBox $w={w}>
        <select id={id} aria-label={label}>
            {options.map((option) => <option key={option}>{option}</option>)}
        </select>
        <DropMark><Triangle w={8} color="#000" /></DropMark>
    </DropBox>
);

const SurfaceDialog = () => (
    <Dialog role="dialog" aria-labelledby="dialog-title">
        <DialogTitle>
            <span id="dialog-title">Surface Finish Parallel</span>
            <DialogClose aria-label="Close">
                <svg width="10" height="9" viewBox="0 0 10 9">
                    <path d="M1 1 L9 8 M9 1 L1 8" stroke="#4A2430" strokeWidth="4" />
                    <path d="M1.3 1.3 L8.7 7.7 M8.7 1.3 L1.3 7.7" stroke="#fff" strokeWidth="2.2" />
                </svg>
            </DialogClose>
        </DialogTitle>
        <DialogBody>
            <TabList role="tablist">
                <Tab role="tab" aria-selected="false">Toolpath parameters</Tab>
                <Tab role="tab" aria-selected="false">Surface parameters</Tab>
                <Tab role="tab" aria-selected="true" $active>Finish parallel parameters</Tab>
            </TabList>
            <TabPage role="tabpanel">
                <FieldGrid>
                    <PushButton $w={97}>Total tolerance...</PushButton>
                    <YellowField aria-label="Total tolerance" defaultValue="0.017" />
                    <PushButton $w={79}>Max. stepover...</PushButton>
                    <YellowField aria-label="Max. stepover" defaultValue="0.1" />
                    <FieldLabel htmlFor="method" $indent>Cutting method</FieldLabel>
                    <Drop id="method" w={90} options={["Zigzag", "One way"]} />
                    <FieldLabel htmlFor="angle">Machining angle</FieldLabel>
                    <YellowField id="angle" defaultValue="0.0" />
                </FieldGrid>
                <CheckRow>
                    <Check type="checkbox" id="approx" />
                    <label htmlFor="approx">Use approximate start point</label>
                </CheckRow>
                <OptionRow>
                    <Check type="checkbox" aria-label="Depth limits" />
                    <PushButton $w={73} disabled>Depth limits...</PushButton>
                    <PushButton $w={78} $focus>Gap settings...</PushButton>
                    <PushButton $w={102}>Advanced settings...</PushButton>
                </OptionRow>
            </TabPage>
            <DialogActions>
                <ActionButton aria-label="OK"><Icon name="ok" size={20} /></ActionButton>
                <ActionButton aria-label="Cancel"><Icon name="cancel" size={20} /></ActionButton>
                <ActionButton aria-label="Help"><Icon name="help" size={20} /></ActionButton>
            </DialogActions>
        </DialogBody>
    </Dialog>
);

const App = () => (
    <Screen>
        <GlobalStyle />
        <TitleBar>
            <Icon name="mcLogo" />
            <span>Mastercam Mill X5</span>
            <WindowButtons>
                <WindowButton aria-label="Minimize">
                    <svg width="12" height="10"><rect x="1" y="5" width="10" height="3.5" rx="1" fill="#fff" stroke="#555B6A" /></svg>
                </WindowButton>
                <WindowButton aria-label="Restore">
                    <svg width="12" height="11" fill="#fff" stroke="#555B6A">
                        <rect x="4.5" y=".5" width="7" height="6" /><rect x="6.5" y="2.5" width="3" height="2" />
                        <rect x=".5" y="3.5" width="7" height="7" /><rect x="2.5" y="6" width="3" height="2" />
                    </svg>
                </WindowButton>
                <WindowButton aria-label="Close window">
                    <svg width="12" height="10">
                        <path d="M1.5 1 L10.5 9 M10.5 1 L1.5 9" stroke="#555B6A" strokeWidth="4" />
                        <path d="M2 1.5 L10 8.5 M10 1.5 L2 8.5" stroke="#fff" strokeWidth="2" />
                    </svg>
                </WindowButton>
            </WindowButtons>
        </TitleBar>
        <MenuBar>
            {menus.map((menu) => <MenuItem key={menu}>{menu}</MenuItem>)}
        </MenuBar>
        <ToolRow>
            {row1.map((items, i) => (items ? <Tools key={i} items={items} /> : <RowGap key={i} />))}
        </ToolRow>
        <ToolRow>
            {row2.map((items, i) => <Tools key={i} items={items} />)}
        </ToolRow>

        <EntryBar>
            <Coordinate axis="X" value="-17.38343" />
            <Coordinate axis="Y" value="-12.83847" />
            <Coordinate axis="Z" value="0.0" />
            <EntryGroup $gap={1}>
                <FlatButton aria-label="Fast point"><Icon name="lightGrey" size={20} /></FlatButton>
                <FlatButton aria-label="Override"><Icon name="bangGrey" size={18} /></FlatButton>
                <FlatButton aria-label="AutoCursor"><Icon name="boxGrey" size={20} /></FlatButton>
                <FlatButton $narrow aria-label="AutoCursor options"><Triangle color="#A8A8A8" w={6} /></FlatButton>
            </EntryGroup>
            <FramedButton aria-label="Point help"><Icon name="help" size={20} /></FramedButton>
            <DoubleRule />
            <EntryGroup $gap={8}>
                <PushButton $w={46}>All...</PushButton>
                <PushButton $w={46}>Only...</PushButton>
                <FramedButton aria-label="Quick select"><Icon name="pickBolt" size={20} /></FramedButton>
                <Drop label="Selection" w={72} options={["In", "Out"]} />
            </EntryGroup>
            <CursorButton aria-label="Select">
                <Icon name="cursor" size={20} />
                <Triangle w={5} color="#000" />
            </CursorButton>
            <EntryGroup $gap={2}>
                <FlatButton aria-label="Standard selection"><Icon name="cursorGrey" size={20} /></FlatButton>
                <FramedButton aria-label="Solid selection"><Icon name="solidCheck" size={18} /></FramedButton>
            </EntryGroup>
            <EntryGroup $gap={8}>
                <EntryGroup $gap={2}>
                    <FlatButton aria-label="Edge"><Icon name="hexGrey" /></FlatButton>
                    <FlatButton aria-label="Face"><Icon name="hexGrey" /></FlatButton>
                    <FlatButton aria-label="Body"><Icon name="hexGrey" /></FlatButton>
                </EntryGroup>
                <EntryGroup $gap={3}>
                    <FlatButton aria-label="From back"><Icon name="cubeGrey" /></FlatButton>
                    <FramedButton aria-label="Select last"><Icon name="backArrow" size={18} /></FramedButton>
                </EntryGroup>
                <FramedButton aria-label="Validate"><Icon name="pickCheck" size={18} /></FramedButton>
                <EntryGroup $gap={2}>
                    <FramedButton aria-label="Clear"><Icon name="stop" size={18} /></FramedButton>
                    <FramedButton aria-label="End selection"><Icon name="go" size={20} /></FramedButton>
                </EntryGroup>
                <FramedButton aria-label="Selection help"><Icon name="help" size={20} /></FramedButton>
            </EntryGroup>
        </EntryBar>
        <RibbonBar>Ribbon Bar</RibbonBar>

        <WorkArea>
            <SideBar $w={28}>
                {leftBars.map((items, i) => <Tools key={i} items={items} vertical />)}
                <SideFill />
            </SideBar>
            <Viewport><Scene /></Viewport>
            <SideBar $w={31}>
                <SideCap />
                {rightBars.map((items, i) => <Tools key={i} items={items} vertical />)}
                <SideFill />
            </SideBar>
            <SurfaceDialog />
        </WorkArea>

        <StatusBar>
            <StatusButton $w={22}>3D</StatusButton>
            <StatusButton $w={46}>Gview</StatusButton>
            <StatusButton $w={36}>Planes</StatusButton>
            <StatusButton $w={13}>Z</StatusButton>
            <DepthField>
                <input aria-label="Z depth" defaultValue="0.0" autoFocus onFocus={(e) => e.target.select()} />
                <Triangle w={8} color="#000" />
            </DepthField>
            <ColorBox>
                <button aria-label="System color">10</button>
                <Triangle w={10} h={8} color="#000" />
            </ColorBox>
            <LevelBox>
                <label htmlFor="level">Level</label>
                <StatusDrop $w={99}>
                    <select id="level"><option>1</option></select>
                    <DropMark><Triangle w={8} color="#000" /></DropMark>
                </StatusDrop>
            </LevelBox>
            <StatusButton $w={59}>Attributes</StatusButton>
            <StatusDrop $w={36}>
                <select aria-label="Point style" />
                <DropArt><svg width="36" height="18"><path d="M3 10.5 H12 M8 5 L7 15 M4 14 L11 7" stroke="#000" fill="none" /></svg></DropArt>
                <DropMark><Triangle w={7} color="#000" /></DropMark>
            </StatusDrop>
            <StatusDrop $w={60}>
                <select aria-label="Line width" />
                <DropArt><svg width="60" height="18"><path d="M2 9.5 H41" stroke="#000" strokeWidth="3" /></svg></DropArt>
                <DropMark><Triangle w={7} color="#000" /></DropMark>
            </StatusDrop>
            <StatusDrop $w={66}>
                <select aria-label="Line style" />
                <DropArt><svg width="66" height="18"><path d="M2 9.5 H47" stroke="#000" /></svg></DropArt>
                <DropMark><Triangle w={7} color="#000" /></DropMark>
            </StatusDrop>
            <StatusButton $w={39}>WCS</StatusButton>
            <StatusButton $w={51}>Groups</StatusButton>
            <StatusButton $w={11}>!</StatusButton>
            <StatusButton $w={10}>?</StatusButton>
        </StatusBar>

        <TaskBar>
            <StartButton aria-label="Start">
                <svg width="36" height="36" viewBox="0 0 36 36">
                    <defs>
                        <radialGradient id="orb" cx=".5" cy=".95" r=".9">
                            <stop offset="0" stopColor="#30E0FF" />
                            <stop offset=".4" stopColor="#1478B8" />
                            <stop offset=".8" stopColor="#184C80" />
                            <stop offset="1" stopColor="#7898B8" />
                        </radialGradient>
                    </defs>
                    <circle cx="18" cy="18" r="17" fill="url(#orb)" stroke="#1C3C60" />
                    <path d="M3 15 A15 15 0 0 1 33 15 Q18 20 3 15" fill="#fff" opacity=".25" />
                    <path d="M10 9 Q14 6 18 9 L16.5 17 Q12 14.5 8 17 Z" fill="#F06020" />
                    <path d="M19 9.5 Q24 12 29 9 L27 17 Q22 20 17.5 17 Z" fill="#90D030" />
                    <path d="M7.5 18.5 Q12 16 16 18.5 L14.5 26 Q10 23 6.5 25.5 Z" fill="#3C9CF0" />
                    <path d="M17.5 19 Q22 21.5 26.5 18.5 L25 26 Q20 29 15.5 26 Z" fill="#FFD030" />
                </svg>
            </StartButton>
            <TaskButton $open aria-label="Explorer"><Icon name="folder" /></TaskButton>
            <TaskButton aria-label="Media player"><Icon name="media" /></TaskButton>
            <TaskButton aria-label="Firefox"><Icon name="firefox" /></TaskButton>
            <TaskButton $open $current aria-label="Mastercam"><Icon name="mcx" /></TaskButton>
            <TaskButton $open $stack aria-label="Word"><Icon name="word" /></TaskButton>
            <Tray>
                <span>IN</span>
                <TrayButton aria-label="Show hidden icons">
                    <svg width="8" height="5"><path d="M0 4.5 L4 0 L8 4.5 Z" fill="#fff" stroke="#445" strokeWidth=".6" /></svg>
                </TrayButton>
                <TrayButton aria-label="Action center"><Icon name="flag" /></TrayButton>
                <TrayButton aria-label="Network"><Icon name="network" /></TrayButton>
                <TrayButton aria-label="Volume"><Icon name="speaker" /></TrayButton>
                <Clock>16:50</Clock>
                <ShowDesktop aria-label="Show desktop" />
            </Tray>
        </TaskBar>
    </Screen>
);

export default App;

// ---------- styles ----------

const GlobalStyle = createGlobalStyle`
    * {
        box-sizing: border-box;
    }
    body {
        margin: 0;
        overflow: hidden;
        background: #F0F0F0;
        font-family: ${UI_FONT};
        font-size: 12px;
    }
    button, input, select {
        font: inherit;
        color: inherit;
        margin: 0;
        padding: 0;
    }
    svg {
        display: block;
        flex: none;
    }
`;

const Screen = styled.div`
    display: flex;
    flex-direction: column;
    min-height: 100vh;
    overflow: hidden;
`;

const TitleBar = styled.header`
    display: flex;
    align-items: center;
    gap: 8px;
    height: 22px;
    padding: 0 0 0 2px;
    border-top: 1px solid #4A4A4A;
    background: linear-gradient(#BCCAD9, #D8E4F0);
    color: #444;
`;

const WindowButtons = styled.div`
    display: flex;
    gap: 2px;
    margin-left: auto;
    padding-right: 2px;
`;

const WindowButton = styled.button`
    display: flex;
    align-items: center;
    justify-content: center;
    width: 31px;
    height: 17px;
    border: 1px solid #7C8898;
    border-radius: 3px;
    background: linear-gradient(#DCE6F0, #C4D0DE);
`;

const MenuBar = styled.nav`
    display: flex;
    align-items: center;
    gap: 12px;
    height: 20px;
    padding-left: 7px;
    background: linear-gradient(#FFFFFF, #E8ECF8 40%, #D6DCF0);
    border-bottom: 1px solid #C8CCD8;
`;

const MenuItem = styled.button`
    border: 0;
    background: none;
    color: #6C6C74;
    line-height: 18px;
    white-space: nowrap;
`;

const ToolRow = styled.div`
    display: flex;
    height: 30px;
    border-top: 1px solid #A0A0A0;
    background: #D4DAEC;
    overflow: hidden;
    &:first-of-type {
        height: 31px;
    }
`;

const RowGap = styled.div`
    width: 11px;
    flex: none;
    border-right: 2px solid #F4F4F8;
    background: linear-gradient(#F0F2F8, #D4DAEC);
`;

const ToolGroup = styled.div`
    display: flex;
    flex: none;
    align-items: center;
    ${({ $vertical }) => $vertical ? css`
        flex-direction: column;
        padding-bottom: 3px;
        border-bottom: 1px solid #A0A0A0;
        background: linear-gradient(90deg, #F0F0F0 80%, #D8DEF0);
    ` : css`
        padding-right: 3px;
        border-right: 1px solid #A0A0A0;
        background: linear-gradient(#F0F0F0 82%, #DCE2F2);
    `}
`;

const Grip = styled.span`
    ${({ $vertical }) => $vertical ? css`
        width: 20px;
        height: 2px;
        margin: 3px 0 6px;
        background: repeating-linear-gradient(90deg, #B0B0B0 0 2px, transparent 2px 5px);
    ` : css`
        width: 2px;
        height: 17px;
        margin: 0 6px 0 3px;
        background: repeating-linear-gradient(#B0B0B0 0 2px, transparent 2px 5px);
    `}
`;

const ToolButton = styled.button`
    display: flex;
    align-items: center;
    justify-content: center;
    width: ${({ $wide }) => $wide ? "25px" : "23px"};
    height: ${({ $vertical }) => $vertical ? "22px" : "24px"};
    flex: none;
    border: 0;
    background: none;
`;

const DropButton = styled.button`
    display: flex;
    align-items: center;
    justify-content: center;
    width: 13px;
    height: 24px;
    border: 0;
    background: none;
`;

const Divider = styled.span`
    background: #A0A0A0;
    ${({ $vertical }) => $vertical ? css`
        width: 19px;
        height: 1px;
        margin: 4px 0 3px;
    ` : css`
        width: 1px;
        height: 17px;
        margin: 0 5px 0 2px;
    `}
`;

const EntryBar = styled.div`
    display: flex;
    align-items: center;
    gap: 6px;
    height: 31px;
    padding: 0 5px;
    border-top: 1px solid #A0A0A0;
    background: #FFFFCC;
    font-family: ${ENTRY_FONT};
    font-size: 11px;
    overflow: hidden;
`;

const EntryGroup = styled.div`
    display: flex;
    align-items: center;
    gap: ${({ $gap }) => $gap}px;
`;

const CoordinateBox = styled.div`
    display: flex;
    align-items: center;
    gap: 4px;
    margin-right: 6px;
    &:nth-of-type(3) {
        margin-right: 3px;
    }
`;

const CoordinateField = styled.div`
    display: flex;
    align-items: center;
    width: 72px;
    height: 22px;
    padding: 2px 4px 2px 2px;
    border: 1px solid #B4B4B4;
    border-radius: 2px;
    background: #fff;
    input {
        flex: 1;
        min-width: 0;
        height: 16px;
        margin-right: 6px;
        border: 0;
        background: #F0F0F0;
    }
`;

const PushButton = styled.button`
    display: flex;
    align-items: center;
    justify-content: center;
    width: ${({ $w }) => $w}px;
    height: ${({ $axis }) => $axis ? "22px" : "21px"};
    flex: none;
    border: 1px solid #707070;
    border-radius: 3px;
    background: linear-gradient(#F4F4F4, #EBEBEB 50%, #DDDDDD 50%, #CFCFCF);
    color: #000;
    white-space: nowrap;
    ${({ $axis }) => $axis && css`
        border-color: #989898;
        background: #F0F0F0;
        font-size: 12px;
        text-decoration: underline;
    `}
    ${({ $focus }) => $focus && css`
        border-color: #3C7FB1;
        box-shadow: inset 0 0 0 1px #48D0F4;
    `}
    &:disabled {
        border-color: #ADB2B5;
        background: #F4F4F4;
        color: #909090;
    }
`;

const FlatButton = styled.button`
    display: flex;
    align-items: center;
    justify-content: center;
    width: ${({ $narrow }) => $narrow ? "12px" : "22px"};
    height: 22px;
    flex: none;
    border: 0;
    border-right: 1px solid #B8B8B8;
    border-bottom: 1px solid #B8B8B8;
    background: #F0F0F0;
`;

const FramedButton = styled.button`
    display: flex;
    align-items: center;
    justify-content: center;
    width: 22px;
    height: 22px;
    flex: none;
    border: 1px solid #808080;
    border-radius: 3px;
    background: linear-gradient(#F2F2F2, #D4D4D4);
`;

const DoubleRule = styled.span`
    width: 4px;
    height: 30px;
    flex: none;
    margin-right: 8px;
    border: 1px solid #A0A0A0;
    border-width: 0 1px;
`;

const CursorButton = styled.button`
    display: flex;
    align-items: center;
    justify-content: space-between;
    width: 37px;
    height: 22px;
    padding: 0 3px 0 4px;
    flex: none;
    border: 0;
    background: #F4F4F0;
`;

const DropMark = styled.span`
    justify-self: end;
    margin-right: 4px;
    pointer-events: none;
`;

const DropArt = styled.span`
    pointer-events: none;
`;

const DropBox = styled.div`
    display: grid;
    align-items: center;
    width: ${({ $w }) => $w}px;
    height: 21px;
    flex: none;
    > * {
        grid-area: 1 / 1;
    }
    select {
        width: 100%;
        height: 21px;
        padding-left: 3px;
        appearance: none;
        border: 1px solid #707070;
        border-radius: 3px;
        background: linear-gradient(#F4F4F4, #EBEBEB 50%, #DDDDDD 50%, #CFCFCF);
    }
`;

const RibbonBar = styled.div`
    display: flex;
    align-items: center;
    height: 31px;
    padding-left: 187px;
    border-top: 1px solid #A0A0A0;
    border-bottom: 1px solid #808080;
    font-family: ${ENTRY_FONT};
    font-size: 11px;
`;

const WorkArea = styled.main`
    position: relative;
    display: flex;
    flex: 1;
    min-height: 0;
    background: #00009B;
`;

const SideBar = styled.aside`
    display: flex;
    flex-direction: column;
    width: ${({ $w }) => $w}px;
    flex: none;
    background: #F0F0F0;
    border-left: 1px solid #fff;
    overflow: hidden;
`;

const SideCap = styled.div`
    height: 15px;
    flex: none;
    border-bottom: 1px solid #A0A0A0;
    background: linear-gradient(#FFFFFF, #D4DAEC);
`;

const SideFill = styled.div`
    flex: 1;
    background: linear-gradient(#E4E8F8, #D0D8F0);
`;

const Viewport = styled.section`
    position: relative;
    flex: 1;
    overflow: hidden;
`;

const SceneSvg = styled.svg`
    position: absolute;
    inset: 0;
    width: 100%;
    height: 100%;
`;

const SceneText = styled.text`
    font: bold 12px "Noto Sans", sans-serif;
    text-anchor: middle;
`;

const Dialog = styled.section`
    position: absolute;
    z-index: 2;
    top: 0;
    left: 28px;
    display: flex;
    flex-direction: column;
    width: 694px;
    height: calc(100% + 6px);
    border: 1px solid #111;
    border-radius: 5px 5px 0 0;
    background: #F0F0F0;
    box-shadow: inset -1px -1px 0 #3CC8E8, inset 2px 0 0 #C4D8EC;
    font-family: ${DIALOG_FONT};
    font-size: 11px;
    color: #000;
`;

const DialogTitle = styled.header`
    display: flex;
    align-items: center;
    justify-content: space-between;
    height: 23px;
    padding: 0 4px 0 6px;
    border-radius: 4px 4px 0 0;
    background: linear-gradient(#98B4D2, #BAD1EB);
    font-family: ${UI_FONT};
    font-size: 11px;
`;

const DialogClose = styled.button`
    display: flex;
    align-items: center;
    justify-content: center;
    width: 31px;
    height: 17px;
    border: 1px solid #5C1A1C;
    border-radius: 3px;
    background: linear-gradient(#E8A498, #D88074 50%, #B83424 50%, #D06450);
`;

const DialogBody = styled.div`
    display: flex;
    flex: 1;
    flex-direction: column;
    padding: 7px 10px 4px 8px;
`;

const TabList = styled.div`
    display: flex;
    align-items: flex-end;
    padding-left: 2px;
`;

const Tab = styled.button`
    height: 19px;
    padding: 0 5px;
    border: 1px solid #8C8E94;
    border-bottom: 0;
    background: linear-gradient(#F2F2F2, #EBEBEB 50%, #DDDDDD 50%, #D0D0D0);
    white-space: nowrap;
    & + & {
        border-left: 0;
    }
    ${({ $active }) => $active && css`
        height: 21px;
        margin-bottom: -1px;
        padding: 0 7px;
        background: #fff;
        z-index: 1;
    `}
`;

const TabPage = styled.div`
    display: flex;
    flex: 1;
    flex-direction: column;
    padding: 25px 7px 0;
    border: 1px solid #8C8E94;
    background: #fff;
`;

const FieldGrid = styled.div`
    display: grid;
    grid-template-columns: 104px 135px 92px 1fr;
    row-gap: 11px;
    align-items: start;
`;

const YellowField = styled.input`
    width: 60px;
    height: 23px;
    padding: 0 2px 4px;
    border: 1px solid #E2E3EA;
    border-top-color: #ABADB3;
    box-shadow: inset 0 0 0 1px #fff;
    background: #FFFF80;
`;

const FieldLabel = styled.label`
    width: ${({ $indent }) => $indent ? "100px" : "60px"};
    padding-left: ${({ $indent }) => $indent ? "13px" : "0"};
    margin-top: ${({ $indent }) => $indent ? "1px" : "-4px"};
    line-height: 17px;
`;

const CheckRow = styled.div`
    display: flex;
    align-items: center;
    gap: 3px;
    margin-top: 21px;
    padding-left: 14px;
`;

const Check = styled.input`
    width: 13px;
    height: 13px;
    appearance: none;
    border: 1px solid #8E8F8F;
    box-shadow: inset 0 0 0 1px #F4F4F4, inset 0 0 0 2px #B8BCC4;
    background: linear-gradient(135deg, #D0D4DA, #F8F8F8);
`;

const OptionRow = styled.div`
    display: flex;
    align-items: center;
    gap: 7px;
    margin-top: auto;
    margin-bottom: 142px;
    padding-left: 292px;
    button:nth-of-type(2) {
        margin-left: 15px;
    }
`;

const DialogActions = styled.div`
    display: flex;
    justify-content: flex-end;
    gap: 6px;
    padding: 8px 3px 0 0;
`;

const ActionButton = styled.button`
    display: flex;
    align-items: center;
    justify-content: center;
    width: 52px;
    height: 27px;
    border: 1px solid #707070;
    border-radius: 3px;
    background: linear-gradient(#F4F4F4, #EBEBEB 50%, #DDDDDD 50%, #CFCFCF);
`;

const StatusBar = styled.footer`
    display: flex;
    align-items: center;
    gap: 6px;
    height: 25px;
    padding: 2px 0 0 236px;
    border-top: 1px solid #A0A0A0;
    background: #F0ECEA;
    color: #000;
    overflow: hidden;
`;

const StatusButton = styled.button`
    width: ${({ $w }) => $w}px;
    height: 18px;
    flex: none;
    border: 1px solid #B8B8B8;
    border-radius: 3px;
    background: #F0F0F0;
    line-height: 16px;
    white-space: nowrap;
    display: flex;
    align-items: center;
    justify-content: center;
`;

const DepthField = styled.div`
    display: flex;
    align-items: center;
    gap: 6px;
    width: 80px;
    height: 20px;
    padding: 0 4px 0 2px;
    margin-left: -4px;
    flex: none;
    background: #fff;
    input {
        flex: 1;
        min-width: 0;
        height: 18px;
        border: 0;
        outline: 0;
        background: #FFFF80;
    }
    input::selection {
        background: #3399FF;
        color: #fff;
    }
`;

const ColorBox = styled.div`
    display: flex;
    align-items: center;
    gap: 4px;
    width: 48px;
    height: 18px;
    flex: none;
    border: 1px solid #B8B8B8;
    border-left: 0;
    button {
        width: 31px;
        height: 17px;
        border: 0;
        background: #00FF00;
        line-height: 15px;
    }
`;

const LevelBox = styled.div`
    display: flex;
    align-items: center;
    gap: 2px;
    flex: none;
    label {
        width: 30px;
    }
`;

const StatusDrop = styled.div`
    display: grid;
    align-items: center;
    width: ${({ $w }) => $w}px;
    height: 20px;
    flex: none;
    background: #fff;
    > * {
        grid-area: 1 / 1;
    }
    select {
        width: 100%;
        height: 20px;
        padding-left: 3px;
        appearance: none;
        border: 0;
        background: #fff;
    }
`;

const TaskBar = styled.div`
    position: relative;
    z-index: 3;
    display: flex;
    align-items: center;
    height: 30px;
    border-top: 1px solid #5A6878;
    background: linear-gradient(90deg, #7C8FA8 0, #8496B0 50px, #A6BFDD 62px, #A6BFDD 74%, #8193AA 79%);
`;

const StartButton = styled.button`
    width: 36px;
    height: 36px;
    margin: 0 15px 0 9px;
    border: 0;
    border-radius: 50%;
    background: none;
`;

const TaskButton = styled.button`
    display: flex;
    align-items: center;
    justify-content: center;
    width: 43px;
    height: 29px;
    margin-right: 3px;
    border: 1px solid transparent;
    border-radius: 3px;
    background: none;
    ${({ $open }) => $open && css`
        border-color: #5C6C80;
        box-shadow: inset 0 0 0 1px #D8E4F0;
        background: linear-gradient(135deg, #C8D6E6, #9CB2CC);
    `}
    ${({ $current }) => $current && css`
        background: linear-gradient(135deg, #F0F4F8, #C4D2E2);
    `}
    ${({ $stack }) => $stack && css`
        width: 39px;
        box-shadow: inset 0 0 0 1px #D8E4F0, 3px 0 0 #B8CCE4, 4px 0 0 #5C6C80;
    `}
`;

const Tray = styled.div`
    display: flex;
    align-items: center;
    align-self: stretch;
    gap: 8px;
    margin-left: auto;
    color: #fff;
    span {
        margin-right: 11px;
    }
`;

const TrayButton = styled.button`
    display: flex;
    border: 0;
    background: none;
    &:first-of-type {
        margin-right: 4px;
    }
`;

const Clock = styled.time`
    margin: 0 16px 0 23px;
`;

const ShowDesktop = styled.button`
    align-self: stretch;
    width: 14px;
    border: 1px solid #3C4858;
    background: linear-gradient(135deg, #A8B4C4, #4C5868 60%, #687484);
`;
